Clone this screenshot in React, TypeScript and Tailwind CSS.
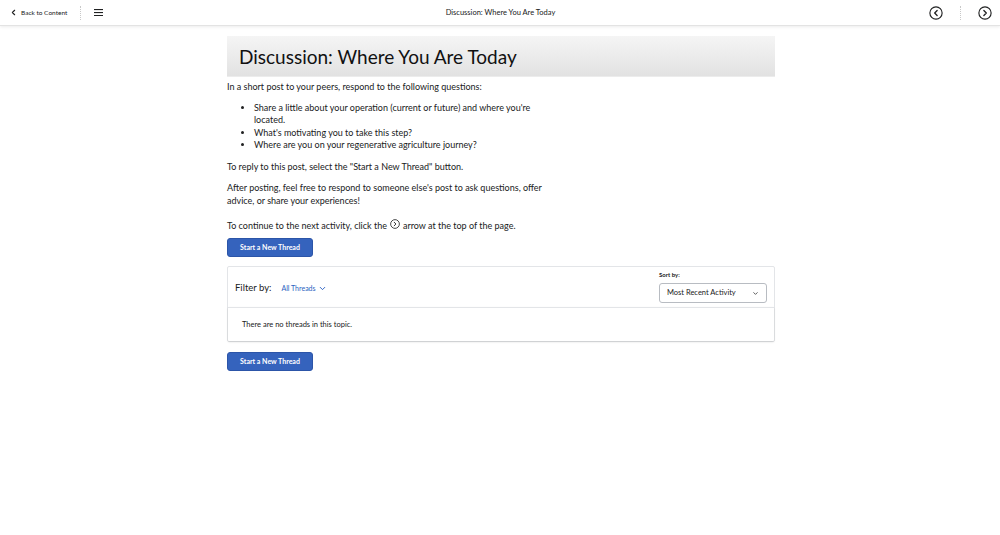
import { ChevronLeft, ChevronDown } from 'lucide-react';

function CircleArrow({ dir, size = 14 }: { dir: 'left' | 'right'; size?: number }) {
  return (
    <svg width={size} height={size} viewBox="0 0 16 16" fill="none" stroke="#202122" strokeWidth={1.3}>
      <circle cx="8" cy="8" r="7" />
      {dir === 'left' ? (
        <path d="M9.3 5.2 6.5 8l2.8 2.8" strokeLinecap="round" strokeLinejoin="round" strokeWidth={1.5} />
      ) : (
        <path d="M6.7 5.2 9.5 8l-2.8 2.8" strokeLinecap="round" strokeLinejoin="round" strokeWidth={1.5} />
      )}
    </svg>
  );
}

function ThreadButton() {
  return (
    <button className="block w-[86px] h-[19px] rounded-[3px] bg-[#3563bd] border border-[#2c55a8] text-white text-[7px] font-bold leading-none">
      Start a New Thread
    </button>
  );
}

export default function App() {
  return (
    <div className="w-[1000px] h-[535px] bg-white text-[#202122] font-['Lato','Open_Sans',sans-serif] overflow-hidden">
      {/* Top bar */}
      <header className="h-[26px] flex items-center justify-between border-b border-[#e3e3e3] shadow-[0_1px_3px_rgba(0,0,0,0.08)] pl-[9px] pr-[8px]">
        <div className="flex items-center w-[200px]">
          <ChevronLeft className="w-[9px] h-[9px]" strokeWidth={3} />
          <span className="ml-[3px] text-[6.5px] text-[#202122]">Back to Content</span>
          <span className="ml-[13px] h-[14px] border-l border-dotted border-[#c8c8c8]" />
          <svg className="ml-[13px]" width="9" height="7" viewBox="0 0 9 7">
            <rect y="0" width="9" height="1.1" fill="#202122" />
            <rect y="3" width="9" height="1.1" fill="#202122" />
            <rect y="6" width="9" height="1.1" fill="#202122" />
          </svg>
        </div>
        <div className="text-[7.5px] text-[#202122]">Discussion: Where You Are Today</div>
        <div className="flex items-center justify-end w-[200px] gap-[17px]">
          <CircleArrow dir="left" />
          <span className="h-[14px] border-l border-dotted border-[#c8c8c8]" />
          <CircleArrow dir="right" />
        </div>
      </header>

      <main className="w-[548px] ml-[227px] pt-[10px]">
        <div className="h-[41px] bg-gradient-to-b from-[#f5f5f5] to-[#e2e2e2] border-b border-[#ececec] flex items-center px-[12px]">
          <h1 className="text-[19px] text-[#111] leading-none">Discussion: Where You Are Today</h1>
        </div>

        <div className="text-[9px] leading-[12.5px] w-[330px]">
          <p className="mt-[4px]">In a short post to your peers, respond to the following questions:</p>
          <ul className="list-disc pl-[27px] mt-[8px]">
            <li>Share a little about your operation (current or future) and where you're located.</li>
            <li>What's motivating you to take this step?</li>
            <li>Where are you on your regenerative agriculture journey?</li>
          </ul>
          <p className="mt-[9px]">To reply to this post, select the "Start a New Thread" button.</p>
          <p className="mt-[9px]">After posting, feel free to respond to someone else's post to ask questions, offer advice, or share your experiences!</p>
          <p className="mt-[12px] flex items-end">
            To continue to the next activity, click the
            <span className="mx-[3px] mb-[3px]"><CircleArrow dir="right" size={10} /></span>
            arrow at the top of the page.
          </p>
        </div>

        <div className="mt-[6px]">
          <ThreadButton />
        </div>

        <div className="mt-[9px] border border-[#e3e5e8] rounded-[2px]">
          <div className="h-[40px] flex items-start justify-between px-[7px]">
            <div className="flex items-center mt-[15px]">
              <span className="text-[9.5px] leading-[12px]">Filter by:</span>
              <span className="ml-[10px] text-[7px] text-[#2a5fc1]">All Threads</span>
              <ChevronDown className="ml-[2px] w-[9px] h-[9px] text-[#2a5fc1]" strokeWidth={2.5} />
            </div>
            <div className="flex flex-col items-start pt-[4px]">
              <span className="text-[6px] font-bold leading-[8px] mb-[4px]">Sort by:</span>
              <div className="w-[108px] h-[20px] border border-[#b8bcc2] rounded-[3px] flex items-center justify-between px-[7px]">
                <span className="text-[7.5px]">Most Recent Activity</span>
                <ChevronDown className="w-[7px] h-[7px]" strokeWidth={2.5} />
              </div>
            </div>
          </div>
          <div className="h-[34px] border-t border-[#e3e5e8] shadow-[0_1px_2px_rgba(0,0,0,0.12)] flex items-center px-[14px]">
            <span className="text-[7.5px] text-[#202122]">There are no threads in this topic.</span>
          </div>
        </div>

        <div className="mt-[10px]">
          <ThreadButton />
        </div>
      </main>
    </div>
  );
}
